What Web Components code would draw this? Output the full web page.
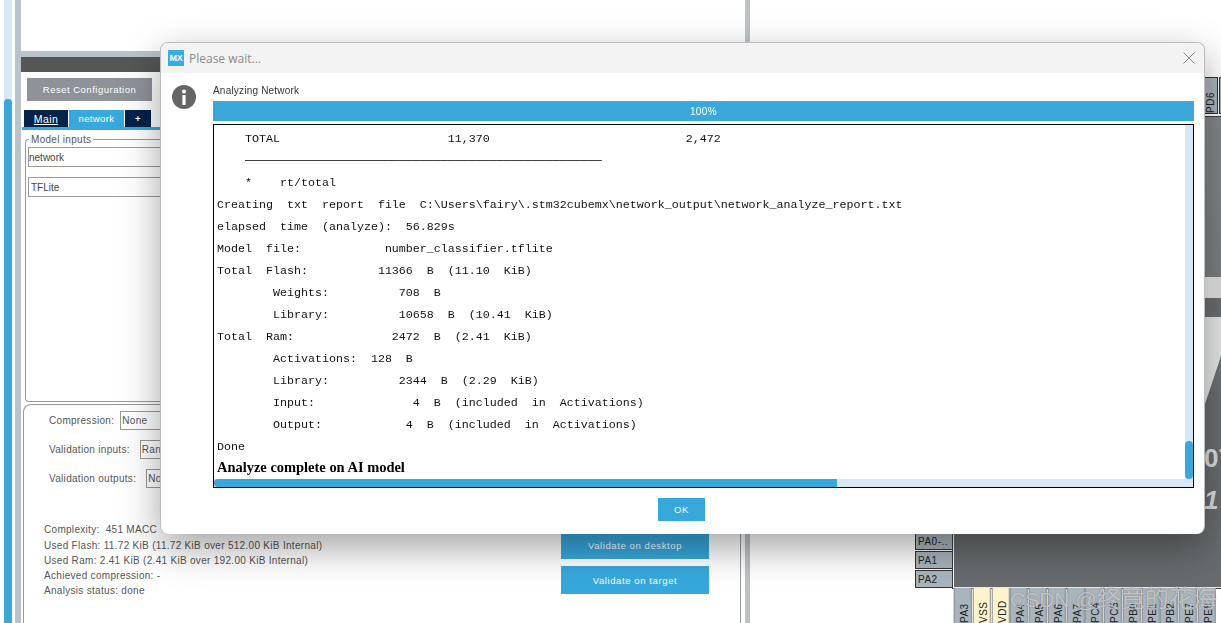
<!DOCTYPE html>
<html lang="en">
<head>
<meta charset="utf-8">
<title>Please wait...</title>
<style>
    html, body {
        margin : 0;
        height : 623px;
        overflow : hidden;
        background : #fff;
        font-family : "Liberation Sans", Arial, sans-serif;
    }
</style>
</head>
<body>

<cube-app>
    <side-rail slot="rail"></side-rail>
    <config-panel slot="panel">
        <ui-button slot="toolbar" tone="grey">Reset Configuration</ui-button>
        <nav-tab slot="tabs" tone="dark" underline>Main</nav-tab>
        <nav-tab slot="tabs" active>network</nav-tab>
        <nav-tab slot="tabs" tone="dark" small>+</nav-tab>
        <model-inputs slot="inputs">
            <text-box style="margin-top:2px;padding-left:0">network</text-box>
            <text-box style="margin-top:10px;padding-left:2px">TFLite</text-box>
        </model-inputs>
        <validate-panel slot="lower">
            <form-row slot="form" label="Compression:" style="gap:6px">None</form-row>
            <form-row slot="form" label="Validation inputs:" style="gap:10px">Random</form-row>
            <form-row slot="form" label="Validation outputs:" style="gap:10px">None</form-row>
            <div slot="stats" style="margin-top:-1px">Complexity:&nbsp; 451 MACC</div>
            <div slot="stats" style="margin-top:1px">Used Flash: 11.72 KiB (11.72 KiB over 512.00 KiB Internal)</div>
            <div slot="stats">Used Ram: 2.41 KiB (2.41 KiB over 192.00 KiB Internal)</div>
            <div slot="stats">Achieved compression: -</div>
            <div slot="stats">Analysis status: done</div>
            <ui-button slot="actions" tall="27">Validate on desktop</ui-button>
            <ui-button slot="actions" tall="28">Validate on target</ui-button>
        </validate-panel>
    </config-panel>
    <pane-divider slot="divider"></pane-divider>
    <pin-canvas slot="canvas">
        <chip-pin slot="top">PD6</chip-pin>
        <chip-pin slot="top"></chip-pin>
        <side-pin slot="left">PA0-..</side-pin>
        <side-pin slot="left">PA1</side-pin>
        <side-pin slot="left">PA2</side-pin>
        <chip-pin slot="bottom">PA3</chip-pin>
        <chip-pin slot="bottom" power>VSS</chip-pin>
        <chip-pin slot="bottom" power>VDD</chip-pin>
        <chip-pin slot="bottom">PA4</chip-pin>
        <chip-pin slot="bottom">PA5</chip-pin>
        <chip-pin slot="bottom">PA6</chip-pin>
        <chip-pin slot="bottom">PA7</chip-pin>
        <chip-pin slot="bottom">PC4</chip-pin>
        <chip-pin slot="bottom">PC5</chip-pin>
        <chip-pin slot="bottom">PB0</chip-pin>
        <chip-pin slot="bottom">PE1</chip-pin>
        <chip-pin slot="bottom">PB2</chip-pin>
        <chip-pin slot="bottom">PE7</chip-pin>
        <chip-pin slot="bottom">PE8</chip-pin>
    </pin-canvas>
</cube-app>

<wait-dialog>
    <report-log>
        <log-line>    TOTAL                        11,370                            2,472</log-line>
        <log-line>    ───────────────────────────────────────────────────</log-line>
        <log-line>    *    rt/total</log-line>
        <log-line>Creating  txt  report  file  C:\Users\fairy\.stm32cubemx\network_output\network_analyze_report.txt</log-line>
        <log-line>elapsed  time  (analyze):  56.829s</log-line>
        <log-line>Model  file:            number_classifier.tflite</log-line>
        <log-line>Total  Flash:          11366  B  (11.10  KiB)</log-line>
        <log-line>        Weights:          708  B</log-line>
        <log-line>        Library:          10658  B  (10.41  KiB)</log-line>
        <log-line>Total  Ram:              2472  B  (2.41  KiB)</log-line>
        <log-line>        Activations:  128  B</log-line>
        <log-line>        Library:          2344  B  (2.29  KiB)</log-line>
        <log-line>        Input:              4  B  (included  in  Activations)</log-line>
        <log-line>        Output:            4  B  (included  in  Activations)</log-line>
        <log-line>Done</log-line>
        <log-line bold>Analyze complete on AI model</log-line>
    </report-log>
</wait-dialog>

<script>
// every element here is only markup + styles, so one small helper registers them
function component(tag, html) {
    const $template = document.createElement("template");
    $template.innerHTML = html;
    customElements.define(tag, class extends HTMLElement {
        constructor() {
            super();
            this.attachShadow({mode:'open'});
            this.shadowRoot.appendChild($template.content.cloneNode(true));
        }
    });
}

component("cube-app", /*html */ `
    <style>
        :host {
            display : flex;
            width : 1221px;
            height : 623px;
            overflow : hidden;
        }
    </style>
    <slot name="rail"></slot>
    <slot name="panel"></slot>
    <slot name="divider"></slot>
    <slot name="canvas"></slot>
`);

component("side-rail", /*html */ `
    <style>
        :host {
            display : flex;
            flex : none;
            width : 21px;
            height : 623px;
            padding-left : 4px;
            box-sizing : border-box;
            gap : 3px;
        }
        #track {
            width : 8px;
            background : #d9e8f5;
            display : flex;
            padding-top : 99px;
            box-sizing : border-box;
        }
        #thumb {
            flex : 1;
            background : #37a8dc;
            border-radius : 4px 4px 0 0;
        }
        #edge {
            width : 6px;
            background : #b8c4ca;
        }
    </style>
    <div id="track"><div id="thumb"></div></div>
    <div id="edge"></div>
`);

component("config-panel", /*html */ `
    <style>
        :host {
            display : flex;
            flex-direction : column;
            flex : none;
            width : 720px;
            height : 623px;
            padding-top : 51px;
            box-sizing : border-box;
            background : #fff;
            position : relative;
        }
        /* the panel's edge only starts below the white header area */
        #edge {
            position : absolute;
            right : 0;
            top : 51px;
            bottom : 0;
            width : 1px;
            background : #9a9a9a;
        }
        #strip { height : 6px; background : #b8c4ca; }
        #title { height : 15px; background : #555757; }
        #toolbar { padding : 6px 0 0 6px; display : flex; }
        #tabs { display : flex; gap : 1px; padding : 9px 0 0 3px; }
        #rule { height : 3px; margin-left : 1px; background : #37a8dc; }
        #inputs { height : 274px; padding : 4px 0 2px 4px; box-sizing : border-box; }
        #lower { flex : 1; padding-left : 2px; min-height : 0; }
    </style>
    <div id="strip"></div>
    <div id="title"></div>
    <div id="toolbar"><slot name="toolbar"></slot></div>
    <div id="tabs"><slot name="tabs"></slot></div>
    <div id="rule"></div>
    <div id="inputs"><slot name="inputs"></slot></div>
    <div id="lower"><slot name="lower"></slot></div>
    <div id="edge"></div>
`);

component("ui-button", /*html */ `
    <style>
        :host {
            display : flex;
            align-items : center;
            justify-content : center;
            box-sizing : border-box;
            width : 148px;
            height : 28px;
            background : #37a8dc;
            color : #fff;
            font-size : 9.5px;
            letter-spacing : .6px;
        }
        :host([tone="grey"]) {
            width : 125px;
            height : 23px;
            background : #8d9399;
            letter-spacing : .5px;
        }
        :host([tall="27"]) { height : 27px; }
    </style>
    <slot></slot>
`);

component("nav-tab", /*html */ `
    <style>
        :host {
            display : flex;
            align-items : center;
            justify-content : center;
            box-sizing : border-box;
            width : 44px;
            height : 17px;
            background : #37a8dc;
            color : #fff;
            font-size : 9.5px;
            letter-spacing : .4px;
        }
        :host([active]) { width : 55px; }
        :host([tone="dark"]) { background : #03234b; }
        :host([small]) { width : 26px; font-weight : bold; }
        :host([underline]) { text-decoration : underline; font-size : 10.5px; }
    </style>
    <slot></slot>
`);

component("model-inputs", /*html */ `
    <style>
        :host { display : block; height : 100%; }
        fieldset {
            margin : 0;
            height : 100%;
            box-sizing : border-box;
            padding : 0 2px;
            border : 1px solid #999;
            border-right : 0;
            border-radius : 4px 0 0 4px;
        }
        legend {
            padding : 0 2px;
            margin-left : 1px;
            color : #555;
            font-size : 10px;
            letter-spacing : .3px;
        }
    </style>
    <fieldset>
        <legend>Model inputs</legend>
        <slot></slot>
    </fieldset>
`);

component("text-box", /*html */ `
    <style>
        :host {
            display : flex;
            align-items : center;
            box-sizing : border-box;
            width : 400px;
            height : 20px;
            padding-left : 1px;
            border : 1px solid #999;
            color : #444;
            font-size : 10px;
        }
    </style>
    <slot></slot>
`);

component("validate-panel", /*html */ `
    <style>
        :host {
            display : grid;
            grid-template-columns : 1fr 148px;
            grid-template-rows : 112px auto;
            box-sizing : border-box;
            height : 240px;
            padding : 6px 32px 0 20px;
            border : 1px solid #999;
            border-radius : 8px 0 0 0;
            border-right : 0;
            color : #555;
            font-size : 10px;
        }
        #form { grid-column : 1 / 3; display : flex; flex-direction : column; gap : 10px; padding-left : 5px; }
        #stats { line-height : 15px; letter-spacing : .3px; white-space : nowrap; }
        #actions { display : flex; flex-direction : column; gap : 7px; margin-top : 9px; }
    </style>
    <div id="form"><slot name="form"></slot></div>
    <div id="stats"><slot name="stats"></slot></div>
    <div id="actions"><slot name="actions"></slot></div>
`);

customElements.define("form-row", class extends HTMLElement {
    constructor() {
        super();
        this.attachShadow({mode:'open'});
        this.shadowRoot.innerHTML = /*html */ `
            <style>
                :host {
                    display : flex;
                    align-items : center;
                    height : 19px;
                    letter-spacing : .3px;
                }
                #value {
                    width : 90px;
                    height : 19px;
                    box-sizing : border-box;
                    padding-left : 1px;
                    border : 1px solid #999;
                    line-height : 17px;
                    white-space : nowrap;
                    overflow : hidden;
                }
            </style>
            <span id="label"></span>
            <div id="value"><slot></slot></div>
        `;
        this.shadowRoot.getElementById("label").textContent = this.getAttribute("label");
    }
});

component("pane-divider", /*html */ `
    <style>
        :host {
            display : flex;
            flex : none;
            width : 9px;
            height : 623px;
            justify-content : flex-end;
        }
        div { width : 5px; background : #b8c4ca; }
    </style>
    <div></div>
`);

component("pin-canvas", /*html */ `
    <style>
        :host {
            display : grid;
            grid-template-columns : 165px 38px 268px;
            grid-template-rows : 117px 471px 35px;
            flex : none;
            width : 471px;
            height : 623px;
            overflow : hidden;
            position : relative;
        }
        #top {
            grid-column : 3;
            display : flex;
            justify-content : flex-end;
            align-items : flex-end;
            gap : 1px;
            padding-bottom : 3px;
            box-sizing : border-box;
            margin-right : -17px;
        }
        #top ::slotted(chip-pin) { height : 37px; }
        #left {
            grid-column : 2;
            grid-row : 2;
            display : flex;
            flex-direction : column;
            justify-content : flex-end;
            gap : 1px;
        }
        #chip {
            grid-column : 3;
            grid-row : 2;
            position : relative;
            overflow : hidden;
            box-sizing : border-box;
            border-left : 1px solid #fff;
            border-bottom : 1px solid #e8e8e8;
            outline : 1px solid #3a3a3a;
            background : linear-gradient(180deg, #82888a 0, #7a8082 34%, #6a6e70 60%, #676b6d 100%);
        }
        #chip svg { position : absolute; left : 0; top : 0; }
        .mark {
            position : absolute;
            left : 250px;
            color : #dcdfe1;
            font : bold 26px/1 "Liberation Sans", sans-serif;
            white-space : nowrap;
        }
        #bottom {
            grid-column : 3;
            grid-row : 3;
            display : flex;
            gap : 1px;
            padding-left : 1px;
        }
        #watermark {
            position : absolute;
            left : 260px;
            top : 586px;
            color : rgba(255,255,255,.62);
            text-shadow : 0 0 1px rgba(60,60,60,.7);
            font : 21px/26px "Liberation Sans", "Noto Sans CJK SC", sans-serif;
            white-space : nowrap;
        }
        #watermark span { font-size : 24px; }
    </style>
    <div id="top"><slot name="top"></slot></div>
    <div id="left"><slot name="left"></slot></div>
    <div id="chip">
        <svg width="268" height="472" viewBox="0 0 268 472">
            <defs>
                <linearGradient id="band" x1="0" x2="1" y1="0" y2="0">
                    <stop offset="0.93" stop-color="#f2f2f2"/>
                    <stop offset="1" stop-color="#dcdcdc"/>
                </linearGradient>
            </defs>
            <rect x="0" y="160" width="268" height="21" fill="url(#band)"/>
            <rect x="0" y="181" width="268" height="19" fill="#6b6f71"/>
            <polygon points="0,200 268,200 268,236 250,290 0,290" fill="#e6e8e9"/>
        </svg>
        <span class="mark" style="top:328px">07</span>
        <span class="mark" style="top:370px;font-style:italic">1</span>
    </div>
    <div id="bottom"><slot name="bottom"></slot></div>
    <div id="watermark">CSDN @<span>终竟的花海</span></div>
`);

component("chip-pin", /*html */ `
    <style>
        :host {
            display : flex;
            flex : none;
            align-items : center;
            box-sizing : border-box;
            width : 17.75px;
            height : 35px;
            padding-right : 4px;
            background : #a9b4bc;
            border : 1px solid #8a8f92;
            border-width : 0 1px;
            color : #222;
            font-size : 10px;
            letter-spacing : .5px;
            writing-mode : vertical-rl;
            transform : rotate(180deg);
            justify-content : flex-start;
        }
        :host([slot="top"]) { border : 1px solid #333; width : 19px; padding-right : 3px; }
        :host([power]) { background : #fcf4cd; }
    </style>
    <slot></slot>
`);

component("side-pin", /*html */ `
    <style>
        :host {
            display : flex;
            align-items : center;
            box-sizing : border-box;
            height : 18px;
            padding-left : 2px;
            background : #a9b4bc;
            border : 1px solid #333;
            color : #222;
            font-size : 10px;
            letter-spacing : .5px;
        }
    </style>
    <slot></slot>
`);

component("wait-dialog", /*html */ `
    <style>
        :host {
            position : fixed;
            left : 160px;
            top : 42px;
            width : 1045px;
            height : 492px;
            box-sizing : border-box;
            display : flex;
            flex-direction : column;
            background : #fff;
            border : 1px solid #bcbcbc;
            border-bottom : 0;
            border-radius : 8px;
            box-shadow : 0 14px 38px rgba(0,0,0,.36);
            overflow : hidden;
        }
        header {
            display : flex;
            align-items : center;
            flex : none;
            height : 30px;
            padding : 0 9px 0 7px;
            background : #f3f3f3;
            color : #8a8a8a;
            font : 12px "Open Sans", sans-serif;
        }
        #logo {
            width : 16px;
            height : 16px;
            margin-right : 5px;
            background : #37aee2;
            color : #fff;
            font : bold 9px/16px "Liberation Sans", sans-serif;
            text-align : center;
            letter-spacing : -.2px;
        }
        #title { flex : 1; }
        #close { display : block; }
        #body {
            flex : 1;
            display : flex;
            padding : 11px 10px 0 11px;
            min-height : 0;
        }
        #icon { flex : none; margin : 1px 17px 0 0; display : block; }
        #main {
            flex : 1;
            display : flex;
            flex-direction : column;
            min-width : 0;
        }
        #label {
            height : 17px;
            color : #333;
            font : 10px/13px "Liberation Sans", sans-serif;
            letter-spacing : .2px;
        }
        #progress {
            flex : none;
            height : 20px;
            box-sizing : border-box;
            border-top : 1px solid #7f8fc4;
            background : #39a9db;
            color : #fff;
            font : 10px/19px "Liberation Sans", sans-serif;
            text-align : center;
            letter-spacing : .4px;
            margin-bottom : 3px;
        }
        footer {
            display : flex;
            justify-content : center;
            padding-top : 10px;
            height : 36px;
            box-sizing : border-box;
            margin-left : -44px;
        }
        #ok {
            width : 47px;
            height : 23px;
            background : #37a8dc;
            color : #fff;
            font : 9.5px/23px "Liberation Sans", sans-serif;
            text-align : center;
            letter-spacing : .6px;
        }
    </style>
    <header>
        <div id="logo">MX</div>
        <div id="title">Please wait...</div>
        <svg id="close" width="12" height="12" viewBox="0 0 12 12">
            <path d="M.5 .5 11.5 11.5M11.5 .5 .5 11.5" stroke="#8a8a8a" stroke-width="1" fill="none"/>
        </svg>
    </header>
    <div id="body">
        <svg id="icon" width="24" height="24" viewBox="0 0 24 24">
            <circle cx="12" cy="12" r="12" fill="#666"/>
            <circle cx="12" cy="6.5" r="2" fill="#fff"/>
            <rect x="10.4" y="10" width="3.2" height="10" fill="#fff"/>
        </svg>
        <div id="main">
            <div id="label">Analyzing Network</div>
            <div id="progress">100%</div>
            <slot></slot>
            <footer><div id="ok">OK</div></footer>
        </div>
    </div>
`);

component("report-log", /*html */ `
    <style>
        :host {
            display : grid;
            grid-template-columns : 1fr 8px;
            grid-template-rows : 1fr 8px;
            flex : none;
            height : 364px;
            box-sizing : border-box;
            border : 1px solid #000;
            overflow : hidden;
        }
        #text { padding : 3px 0 0 3px; overflow : hidden; min-width : 0; }
        #vbar {
            grid-row : 1 / 3;
            grid-column : 2;
            display : flex;
            flex-direction : column;
            justify-content : flex-end;
            padding-bottom : 8px;
            background : #d9e8f5;
        }
        #vbar div { height : 38px; border-radius : 4px; background : #37a8dc; }
        #hbar { background : #d9e8f5; }
        #hbar div { width : 623px; height : 8px; border-radius : 4px 0 0 4px; background : #37a8dc; }
    </style>
    <div id="text"><slot></slot></div>
    <div id="vbar"><div></div></div>
    <div id="hbar"><div></div></div>
`);

component("log-line", /*html */ `
    <style>
        :host {
            display : block;
            height : 22px;
            color : #111;
            font : 11.67px/22px "Liberation Mono", "Courier New", monospace;
        }
        /* only the slotted text keeps its spaces, not the whitespace of this template */
        slot { white-space : pre; }
        :host([bold]) {
            height : 20px;
            color : #000;
            font : bold 14.46px/19px "Liberation Serif", "Times New Roman", serif;
        }
    </style>
    <slot></slot>
`);
</script>
</body>
</html>
